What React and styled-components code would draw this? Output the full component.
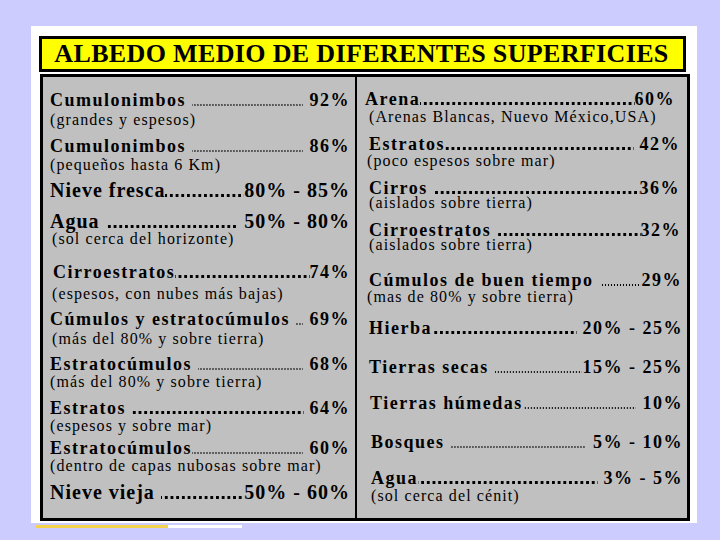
import React from 'react';
import styled, { createGlobalStyle } from 'styled-components';

const GlobalStyle = createGlobalStyle`
  html, body {
    margin: 0;
    padding: 0;
    background: #ccccff;
  }
  body {
    font-family: "Liberation Serif", "Times New Roman", serif;
    color: #000;
  }
`;

const leftEntries = [
  { label: 'Cumulonimbos ', value: ' 92%', note: '(grandes y espesos)', mt: 14, nmt: 3, dots: 'light' },
  { label: 'Cumulonimbos ', value: ' 86%', note: '(pequeños hasta 6 Km)', mt: 10, nmt: 2, dots: 'light' },
  { label: 'Nieve fresca', value: '80% - 85%', mt: 7, big: true },
  { label: 'Agua ', value: ' 50% - 80%', note: '(sol cerca del horizonte)', mt: 9, nmt: -1, big: true, nindent: 2 },
  { label: 'Cirroestratos', value: '74%', note: '(espesos, con nubes más bajas)', mt: 17, nmt: 5, indent: 3, nindent: 2 },
  { label: 'Cúmulos y estratocúmulos ', value: ' 69%', note: '(más del 80% y sobre tierra)', mt: 9, nmt: 3, dots: 'light', nindent: 2 },
  { label: 'Estratocúmulos ', value: ' 68%', note: '(más del 80% y sobre tierra)', mt: 9, nmt: 1, dots: 'light' },
  { label: 'Estratos ', value: ' 64%', note: '(espesos y sobre mar)', mt: 10, nmt: 1 },
  { label: 'Estratocúmulos', value: ' 60%', note: '(dentro de capas nubosas sobre mar)', mt: 6, nmt: 1, dots: 'light' },
  { label: 'Nieve vieja ', value: '50% - 60%', mt: 8, big: true },
];

const rightEntries = [
  { label: 'Arena', value: '60%', note: '(Arenas Blancas, Nuevo México,USA)', mt: 13, nmt: 1, indent: -4, pr: 8 },
  { label: 'Estratos', value: ' 42%', note: '(poco espesos sobre mar)', mt: 11, nmt: 0, nindent: -2, pr: 3 },
  { label: 'Cirros ', value: '36%', note: '(aislados sobre tierra)', mt: 11, nmt: -2, pr: 3 },
  { label: 'Cirroestratos ', value: '32%', note: '(aislados sobre tierra)', mt: 11, nmt: -2, pr: 2 },
  { label: 'Cúmulos de buen tiempo ', value: '29%', note: '(mas de 80% y sobre tierra)', mt: 19, nmt: 0, dots: 'light', nindent: -2, pr: 1 },
  { label: 'Hierba', value: ' 20% - 25%', mt: 15 },
  { label: 'Tierras secas ', value: '15% - 25%', mt: 21, dots: 'light' },
  { label: 'Tierras húmedas', value: ' 10%', mt: 18, dots: 'light', indent: 1 },
  { label: 'Bosques ', value: ' 5% - 10%', mt: 21, dots: 'light', indent: 2 },
  { label: 'Agua', value: ' 3% - 5%', note: '(sol cerca del cénit)', mt: 18, nmt: 1, indent: 2, nindent: 2 },
];

const Entry = ({ e }) => (
  <Item $mt={e.mt}>
    <Line $big={e.big} $indent={e.indent || 0} $pr={e.pr || 0}>
      <Label>{e.label}</Label>
      <Leader $light={e.dots === 'light'} />
      <Value>{e.value}</Value>
    </Line>
    {e.note && (
      <Note $mt={e.nmt || 0} $indent={e.nindent || 0}>
        {e.note}
      </Note>
    )}
  </Item>
);

const App = () => {
  return (
    <Page>
      <GlobalStyle />
      <Card>
        <TitleBar>ALBEDO MEDIO DE DIFERENTES SUPERFICIES</TitleBar>
        <Table>
          <Column $side="left">
            {leftEntries.map((e, i) => (
              <Entry key={i} e={e} />
            ))}
          </Column>
          <Column $side="right">
            {rightEntries.map((e, i) => (
              <Entry key={i} e={e} />
            ))}
          </Column>
        </Table>
      </Card>
      <Strip>
        <Segment $color="#f3d24c" $w={72} />
        <Segment $color="#f1d34f" $w={60} />
        <Segment $color="#ffffff" $w={74} />
      </Strip>
    </Page>
  );
};

const Page = styled.div`
  width: 720px;
  height: 540px;
  box-sizing: border-box;
  padding: 26px 0 0 31px;
  background: #ccccff;
  overflow: hidden;
`;

const Card = styled.div`
  width: 666px;
  height: 497px;
  box-sizing: border-box;
  background: #ffffff;
  padding: 10px 7px 0 8px;
  display: flex;
  flex-direction: column;
  gap: 2px;
`;

const TitleBar = styled.div`
  width: 647px;
  height: 36px;
  box-sizing: border-box;
  border: 3px solid #000;
  background: #ffff00;
  display: flex;
  align-items: center;
  justify-content: center;
  padding-right: 2px;
  font-size: 26px;
  font-weight: bold;
  letter-spacing: 0.35px;
  white-space: nowrap;
`;

const Table = styled.div`
  margin-left: 1px;
  width: 650px;
  height: 447px;
  box-sizing: border-box;
  border: 3px solid #000;
  background: #c0c0c0;
  display: grid;
  grid-template-columns: 314px 1fr;
`;

const Column = styled.div`
  display: flex;
  flex-direction: column;
  min-width: 0;
  padding: ${(p) => (p.$side === 'left' ? '0 5px 0 7px' : '0 4px 0 12px')};
  border-right: ${(p) => (p.$side === 'left' ? '2px solid #000' : 'none')};
`;

const Item = styled.div`
  margin-top: ${(p) => p.$mt}px;
  display: flex;
  flex-direction: column;
`;

const Line = styled.div`
  display: flex;
  align-items: baseline;
  height: ${(p) => (p.$big ? 22 : 18)}px;
  line-height: ${(p) => (p.$big ? 22 : 18)}px;
  font-size: ${(p) => (p.$big ? 20 : 18)}px;
  letter-spacing: ${(p) => (p.$big ? 1 : 1.5)}px;
  font-weight: bold;
  margin-left: ${(p) => p.$indent}px;
  margin-right: ${(p) => p.$pr}px;
  white-space: pre;
`;

const Label = styled.span`
  flex: none;
`;

const Leader = styled.span`
  flex: 1;
  min-width: 0;
  height: ${(p) => (p.$light ? 2 : 3)}px;
  margin-right: ${(p) => (p.$light ? 1 : 0)}px;
  background-image: linear-gradient(
    to right,
    #000 0,
    #000 ${(p) => (p.$light ? 1.4 : 2.6)}px,
    transparent ${(p) => (p.$light ? 1.4 : 2.6)}px
  );
  background-size: ${(p) => (p.$light ? '3px 2px' : '5.7px 3px')};
  background-repeat: repeat-x;
  background-position: right bottom;
`;

const Value = styled.span`
  flex: none;
`;

const Note = styled.div`
  margin-top: ${(p) => p.$mt}px;
  margin-left: ${(p) => p.$indent}px;
  height: 15px;
  line-height: 15px;
  font-size: 16px;
  letter-spacing: 1.1px;
  white-space: nowrap;
`;

const Strip = styled.div`
  display: flex;
  margin: 2px 0 0 5px;
  height: 3px;
`;

const Segment = styled.div`
  width: ${(p) => p.$w}px;
  background: ${(p) => p.$color};
`;

export default App;
